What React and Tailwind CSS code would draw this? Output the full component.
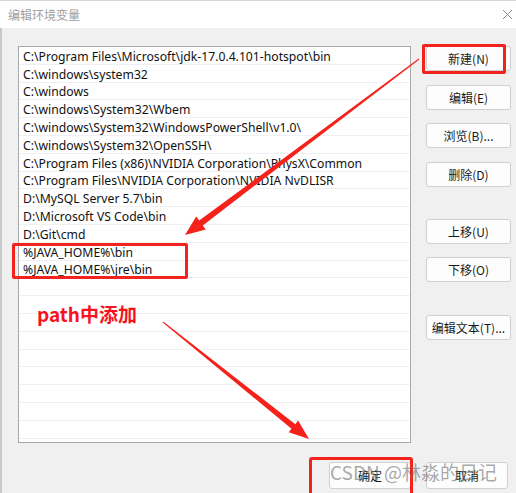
import React from 'react'

const paths = [
  'C:\\Program Files\\Microsoft\\jdk-17.0.4.101-hotspot\\bin',
  'C:\\windows\\system32',
  'C:\\windows',
  'C:\\windows\\System32\\Wbem',
  'C:\\windows\\System32\\WindowsPowerShell\\v1.0\\',
  'C:\\windows\\System32\\OpenSSH\\',
  'C:\\Program Files (x86)\\NVIDIA Corporation\\PhysX\\Common',
  'C:\\Program Files\\NVIDIA Corporation\\NVIDIA NvDLISR',
  'D:\\MySQL Server 5.7\\bin',
  'D:\\Microsoft VS Code\\bin',
  'D:\\Git\\cmd',
  '%JAVA_HOME%\\bin',
  '%JAVA_HOME%\\jre\\bin',
]

const rows = [...paths, ...Array(9).fill('')]

// tapered arrow: thin tail, thick end, triangle head
function arrowPoints(x0, y0, x1, y1, w0, w1, hl, hw) {
  const dx = x1 - x0
  const dy = y1 - y0
  const len = Math.hypot(dx, dy)
  const ux = dx / len
  const uy = dy / len
  const nx = -uy
  const ny = ux
  const bx = x1 - ux * hl
  const by = y1 - uy * hl
  const p = [
    [x0 + nx * w0 / 2, y0 + ny * w0 / 2],
    [bx + nx * w1 / 2, by + ny * w1 / 2],
    [bx + nx * hw / 2, by + ny * hw / 2],
    [x1, y1],
    [bx - nx * hw / 2, by - ny * hw / 2],
    [bx - nx * w1 / 2, by - ny * w1 / 2],
    [x0 - nx * w0 / 2, y0 - ny * w0 / 2],
  ]
  return p.map(([a, b]) => `${a.toFixed(1)},${b.toFixed(1)}`).join(' ')
}

function Btn({ children, className = '' }) {
  return (
    <div className={`flex items-center justify-center bg-[#fdfdfd] border border-[#d0d0d0] rounded-[3px] text-[12px] text-[#1a1a1a] ${className}`}>
      {children}
    </div>
  )
}

const cjk = { fontFamily: '"Noto Sans CJK SC", sans-serif' }

export default function App() {
  return (
    <div
      className="relative w-[516px] h-[493px] overflow-hidden bg-[#f0f0f0] shadow-[inset_2px_0_0_#c8c8c8]"
      style={{ fontFamily: '"Noto Sans", "Noto Sans CJK SC", sans-serif' }}
    >
      {/* title bar */}
      <div className="h-[28px] bg-white flex items-center justify-between pl-[8px] pr-[2px] border-t border-[#d8d8d8]">
        <span className="text-[12px] text-[#a0a0a0]" style={cjk}>编辑环境变量</span>
        <svg width="11" height="11" viewBox="0 0 11 11" className="mr-[1px]">
          <path d="M1 1L10 10M10 1L1 10" stroke="#8a8a8a" strokeWidth="1" />
        </svg>
      </div>

      {/* body */}
      <div className="flex pl-[18px] pt-[18px]">
        <div className="w-[393px] h-[397px] bg-white border border-[#a9a9a9] overflow-hidden">
          {rows.map((r, i) => (
            <div key={i} className="h-[17.8px] border-b border-[#f0f0f0] flex items-center pl-[4px] pt-[3px] text-[12.2px] text-[#111] whitespace-nowrap leading-none">
              {r}
            </div>
          ))}
        </div>
        <div className="ml-[15px] w-[85px] flex flex-col" style={cjk}>
          <Btn className="h-[25px]">新建(N)</Btn>
          <Btn className="h-[25px] mt-[14px]">编辑(E)</Btn>
          <Btn className="h-[25px] mt-[13px]">浏览(B)...</Btn>
          <Btn className="h-[25px] mt-[14px]">删除(D)</Btn>
          <Btn className="h-[25px] mt-[32px]">上移(U)</Btn>
          <Btn className="h-[25px] mt-[13px]">下移(O)</Btn>
          <Btn className="h-[25px] mt-[33px]">编辑文本(T)...</Btn>
        </div>
      </div>

      <div className="flex justify-end gap-[15px] pr-[8px] mt-[19px]" style={cjk}>
        <Btn className="w-[82px] h-[27px]">确定</Btn>
        <Btn className="w-[82px] h-[27px]">取消</Btn>
      </div>

      {/* annotations */}
      <div className="absolute left-[422px] top-[44px] w-[84px] h-[30px] border-[3px] border-[#f2231d] rounded-[2px]" />
      <div className="absolute left-[12px] top-[243px] w-[176px] h-[36px] border-[3px] border-[#f2231d] rounded-[2px]" />
      <div className="absolute left-[309px] top-[457px] w-[104px] h-[40px] border-[3px] border-[#f2231d] rounded-[3px]" />

      <div className="absolute left-[37px] top-[304px] text-[19px] font-bold text-[#f5141e] leading-none" style={cjk}>
        path中添加
      </div>

      <svg className="absolute inset-0 pointer-events-none" width="516" height="493" viewBox="0 0 516 493">
        <polygon points={arrowPoints(419, 59, 185, 235, 1, 6, 20, 16)} fill="#f5211b" />
        <polygon points={arrowPoints(163, 322, 309, 439, 1, 6, 20, 15)} fill="#f5211b" />
      </svg>

      <div className="absolute left-[330px] top-[462px] text-[19px] text-[#6e6e6e]/60 leading-none whitespace-nowrap" style={cjk}>
        CSDN @林淼的日记
      </div>
    </div>
  )
}
